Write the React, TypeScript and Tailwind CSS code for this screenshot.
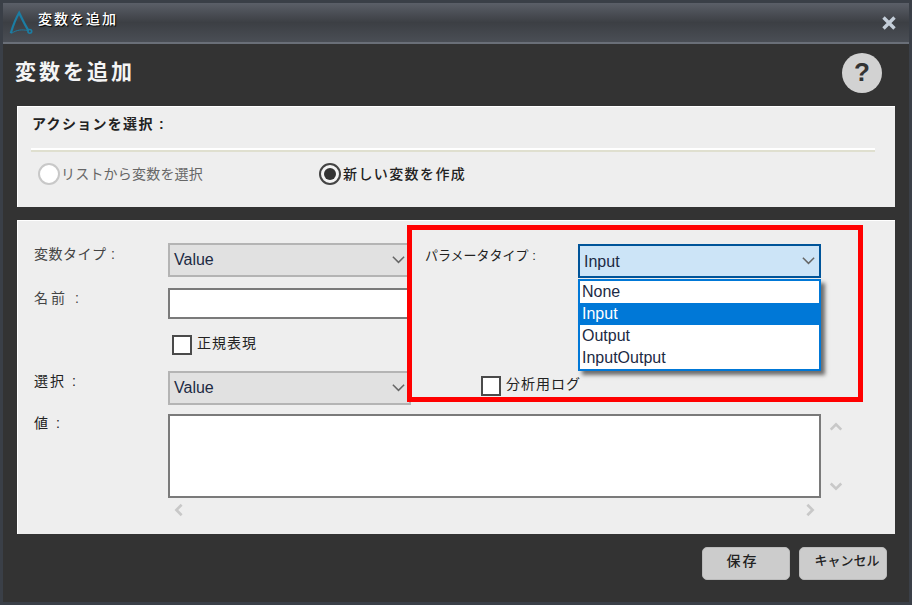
import { useState } from "react";

const cjk = "font-['Liberation_Sans','Noto_Sans_CJK_JP',sans-serif]";

function Chevron({ dir = "down", className = "" }: { dir?: "up" | "down" | "left" | "right"; className?: string }) {
  const points = {
    down: "2,4 8,10 14,4",
    up: "2,11 8,5 14,11",
    left: "11,2 5,8 11,14",
    right: "5,2 11,8 5,14",
  }[dir];
  return (
    <svg viewBox="0 0 16 16" fill="none" stroke="currentColor" className={className}>
      <polyline points={points} />
    </svg>
  );
}

function GraySelect({ value }: { value: string }) {
  return (
    <div className="flex h-[34px] w-[243px] items-center justify-between border-2 border-[#b4b4b4] bg-[#e1e1e1] pl-[4px] pr-[3px] text-[16px] text-[#1c2a44]">
      <span>{value}</span>
      <Chevron className="size-[15px] stroke-[1.6] text-[#666666]" />
    </div>
  );
}

function Check({ label, className = "" }: { label: string; className?: string }) {
  return (
    <div className={`flex items-center gap-[5px] ${className}`}>
      <span className="size-[20px] border-2 border-[#4a4a4a] bg-white" />
      <span className="-mt-[3px] text-[14px] tracking-[1px] text-[#222222]">{label}</span>
    </div>
  );
}

function Radio({ label, checked, dim }: { label: string; checked?: boolean; dim?: boolean }) {
  return (
    <div className={dim ? "flex items-center gap-[1px]" : "flex items-center gap-[2px]"}>
      <span
        className={`flex size-[22px] items-center justify-center rounded-full border-2 ${
          dim ? "border-[#c8c8c8] bg-white" : "border-[#444444] bg-[#f4f4f4]"
        }`}
      >
        {checked && <span className="size-[12px] rounded-full bg-[#333333]" />}
      </span>
      <span className={dim ? "text-[14px] tracking-[0.2px] text-[#666666]" : "text-[14px] font-medium tracking-[1.4px] text-[#222222]"}>{label}</span>
    </div>
  );
}

export default function App() {
  const [options] = useState(["None", "Input", "Output", "InputOutput"]);

  return (
    <div className={`relative flex h-[605px] w-[912px] flex-col overflow-hidden border-[3px] border-[#3a3f47] bg-[#333333] ${cjk}`}>
      {/* title bar */}
      <div className="flex h-[41px] shrink-0 items-center justify-between border-b-2 border-[#6a6f78] bg-gradient-to-b from-[#5b5f68] via-[#3c3f44] to-[#4a4e55] pl-[5px] pr-[13px]">
        <div className="flex items-center gap-[4px]">
          <svg viewBox="0 0 24 28" className="size-[26px]" fill="none" stroke="#1c7da3">
            <path d="M1 25C4 15 7 8 10 3C13 9 16 16 20 22" strokeWidth="2.4" />
            <path d="M2 25C8 21 13 21 19 22" strokeWidth="1" />
            <circle cx="21.5" cy="23" r="2" strokeWidth="1.8" />
          </svg>
          <span className="-mt-[6px] text-[14px] font-medium tracking-[2px] text-white [text-shadow:1px_1px_1px_#000]">変数を追加</span>
        </div>
        <svg viewBox="0 0 14 14" className="size-[14px]" stroke="#c4ced9" strokeWidth="3.4">
          <path d="M1.5 1.5L12.5 12.5M12.5 1.5L1.5 12.5" />
        </svg>
      </div>

      <div className="flex flex-1 flex-col px-[14px]">
        {/* heading */}
        <div className="flex h-[62px] shrink-0 items-center justify-between pr-[12px]">
          <h1 className="-ml-[2px] -mt-[6px] text-[21px] font-bold tracking-[3px] text-[#f4f4f4]">変数を追加</h1>
          <div className="-mt-[5px] mr-[1px] flex size-[40px] items-center justify-center rounded-full bg-[#d2d2d2] text-[26px] font-bold text-[#333333]">?</div>
        </div>

        {/* action panel */}
        <div className="h-[101px] shrink-0 border-l border-t border-white bg-[#eeeeee] pl-[13px] pr-[20px] pt-[7px]">
          <div className="ml-[1px] h-[20px] text-[14px] font-bold tracking-[1.3px] text-[#222222]">アクションを選択 :</div>
          <div className="mt-[14px] h-[4px] border-t-2 border-b-2 border-t-white border-b-[#dfdfcf]" />
          <div className="mt-[11px] flex items-center pl-[7px]">
            <div className="w-[281px]">
              <Radio label="リストから変数を選択" dim />
            </div>
            <Radio label="新しい変数を作成" checked />
          </div>
        </div>

        {/* form panel */}
        <div className="mt-[13px] h-[314px] shrink-0 border-l border-t border-white bg-[#eeeeee]">
          <div className="flex h-[193px]">
            <div className="w-[393px] shrink-0 pt-[22px]">
              <div className="flex h-[34px]">
                <span className="w-[150px] pl-[16px] pt-[1px] text-[14px] tracking-[0.5px] text-[#444444]">変数タイプ :</span>
                <GraySelect value="Value" />
              </div>
              <div className="mt-[11px] flex h-[31px]">
                <span className="w-[150px] pl-[16px] text-[14px] tracking-[3px] text-[#444444]">名前 :</span>
                <div className="h-[31px] w-[243px] border-2 border-[#7a7a7a] bg-white" />
              </div>
              <Check label="正規表現" className="ml-[154px] mt-[16px]" />
              <div className="mt-[16px] flex h-[34px]">
                <span className="w-[150px] pl-[16px] text-[14px] tracking-[2px] text-[#222222]">選択 :</span>
                <GraySelect value="Value" />
              </div>
            </div>
            <div className="relative flex-1 pl-[14px] pt-[23px]">
              <div className="flex h-[34px]">
                <span className="w-[153px] pt-[2px] text-[13px] text-[#222222]">パラメータタイプ :</span>
                <div className="flex h-[34px] w-[243px] items-center justify-between border-2 border-[#005499] bg-[#cce4f7] pl-[4px] pr-[3px] pt-[1px] text-[16px] text-[#1c2a44]">
                  <span>Input</span>
                  <Chevron className="size-[15px] stroke-[1.6] text-[#666666]" />
                </div>
              </div>
              <Check label="分析用ログ" className="ml-[56px] mt-[98px]" />

              {/* open dropdown list */}
              <div className="absolute left-[167px] top-[58px] w-[243px] border-2 border-[#0078d7] bg-white text-[16px] leading-[22px] text-[#1c2a44] shadow-[4px_4px_4px_rgba(0,0,0,0.55)]">
                {options.map((opt) => (
                  <div key={opt} className={opt === "Input" ? "h-[22px] bg-[#0078d7] pl-[2px] text-white" : "h-[22px] pl-[2px]"}>
                    {opt}
                  </div>
                ))}
              </div>
            </div>
          </div>

          <div className="flex">
            <span className="-mt-[1px] w-[150px] pl-[16px] text-[14px] tracking-[2px] text-[#222222]">値 :</span>
            <div className="h-[84px] w-[653px] border-2 border-[#7a7a7a] bg-white" />
            <div className="flex w-[30px] flex-col items-center justify-between pb-[4px] pt-[6px]">
              <Chevron dir="up" className="size-[14px] stroke-[3] text-[#c8c8c8]" />
              <Chevron dir="down" className="size-[14px] stroke-[3] text-[#c8c8c8]" />
            </div>
          </div>
          <div className="ml-[150px] mt-[5px] flex w-[653px] justify-between px-[4px]">
            <Chevron dir="left" className="size-[14px] stroke-[3] text-[#c8c8c8]" />
            <Chevron dir="right" className="size-[14px] stroke-[3] text-[#c8c8c8]" />
          </div>
        </div>

        {/* footer */}
        <div className="mt-[13px] flex justify-end gap-[9px] pr-[8px]">
          <button className="h-[33px] w-[88px] rounded-[5px] border border-[#bbbbbb] bg-[#cccccc] pb-[5px] pr-[7px] text-[14px] font-medium tracking-[2px] text-[#222222]">保存</button>
          <button className="h-[33px] w-[88px] rounded-[5px] border border-[#bbbbbb] bg-[#cccccc] pb-[5px] pl-[8px] text-[13px] font-medium text-[#222222]">キャンセル</button>
        </div>
      </div>

      {/* annotation */}
      <div className="absolute left-[404px] top-[222px] h-[177px] w-[456px] border-[5px] border-[#ff0000]" />
    </div>
  );
}
